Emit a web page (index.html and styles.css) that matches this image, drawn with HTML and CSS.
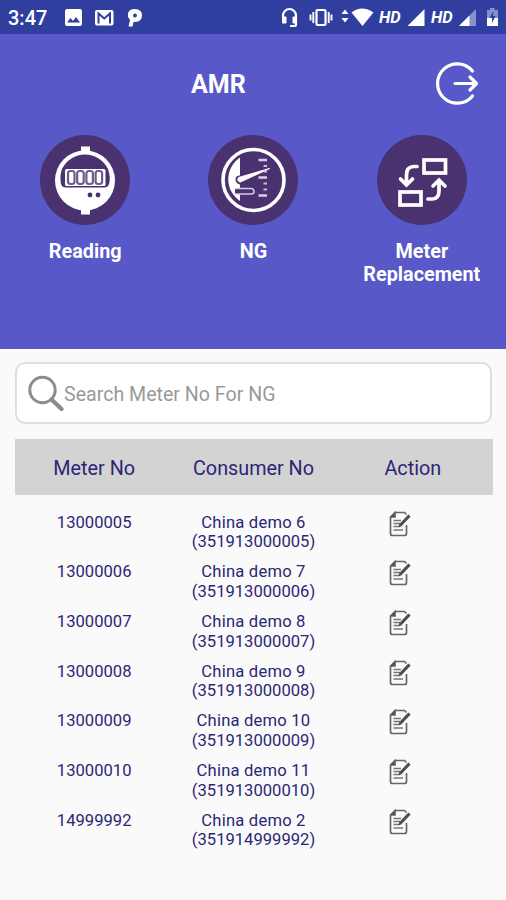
FILE: index.html
```html
<!DOCTYPE html>
<html lang="en">
<head>
  <meta charset="UTF-8">
  <meta name="viewport" content="width=device-width, initial-scale=1.0">
  <title>AMR</title>
  <link rel="stylesheet" href="styles.css">
</head>
<body>
  <svg class="sprite" aria-hidden="true">
    <symbol id="edit" viewBox="0 0 22 26">
      <path d="M6 1.5H15.5L17.5 3.5M17.500 14V22.500Q17.500 24.500 15.500 24.500H3.500Q1.500 24.500 1.500 22.500V6L6 1.500V6H1.500" fill="none" stroke="#666" stroke-width="1.700"/>
      <path d="M1.500 6L6 1.500V6Z" fill="#555"/>
      <path d="M4.500 9.500H12M4.500 12.500H11M4.500 15.500H10M4.500 19H14" stroke="#777" stroke-width="1.400"/>
      <path d="M11.500 14L20.500 4.500" stroke="#4d4d4d" stroke-width="3.200"/>
      <path d="M9.500 16.500L10.500 12.500L13.200 14.900Z" fill="#4d4d4d"/>
    </symbol>
  </svg>

  <div class="status-bar">
    <span class="time">3:47</span>
    <svg class="status-icons" width="78" height="34" viewBox="64 0 78 34">
      <rect x="65" y="9" width="17" height="17" rx="2" fill="#fff"/>
      <path d="M67 22.500L70.500 18L73 21L76 17L80 22.500Z" fill="#303f9f"/>
      <rect x="95" y="10" width="18.500" height="15.500" rx="2" fill="#fff"/>
      <path d="M98.500 23.500V13.500L104.200 18.500L110 13.500V23.500" fill="none" stroke="#303f9f" stroke-width="2"/>
      <path d="M128 17V13.500Q129 9 134.500 9Q142 9 142 15.500Q142 22 135 22H133.500L132.500 26.500H128.500L130 20Z" fill="#fff"/>
      <circle cx="135" cy="15.500" r="1.900" fill="#303f9f"/>
    </svg>
    <svg class="status-icons right" width="96" height="34" viewBox="280 0 96 34">
      <path d="M283 17V15.500A6.500 6.500 0 0 1 296 15.500V24.500Q296 26 294 26H290" fill="none" stroke="#fff" stroke-width="2.200"/>
      <rect x="282" y="16.500" width="4.500" height="7" rx="1" fill="#fff"/>
      <rect x="292.500" y="16.500" width="4.500" height="7" rx="1" fill="#fff"/>
      <rect x="316.500" y="10" width="9" height="15" rx="1" fill="none" stroke="#fff" stroke-width="2.200"/>
      <path d="M313.300 12V23M310.500 14.500V20.500M328.700 12V23M331.500 14.500V20.500" stroke="#fff" stroke-width="1.900"/>
      <path d="M341.500 14L345 9.500L348.500 14ZM341.500 18L345 22.500L348.500 18Z" fill="#fff"/>
      <path d="M351.500 12.500Q362 4.500 373.500 12.500L362.500 26Z" fill="#fff"/>
    </svg>
    <span class="hd">HD</span>
    <svg class="status-icons" width="18" height="34" viewBox="407 0 18 34">
      <path d="M407.500 26L424.500 9V26Z" fill="#fff"/>
    </svg>
    <span class="hd second">HD</span>
    <svg class="status-icons" width="42" height="34" viewBox="458 0 42 34">
      <path d="M459 26L476 9V26Z" fill="#8690ca"/>
      <path d="M459 26L469.500 15.500V26Z" fill="#fff"/>
      <path d="M487 10H490V8H494.500V10H498V26H487Z" fill="#8690ca"/>
      <path d="M487 18H498V26H487Z" fill="#fff"/>
      <path d="M493.500 11L489.500 18H492V23L495.500 16H493Z" fill="#303f9f"/>
    </svg>
  </div>

  <header>
    <div class="title-row">
      <h1>AMR</h1>
      <svg class="logout" width="46" height="46" viewBox="434 60 46 46" fill="none" stroke="#fff" stroke-width="3.200" stroke-linecap="round" stroke-linejoin="round">
        <path d="M472.500 71A19.700 19.700 0 1 0 472.500 96"/>
        <path d="M455 83.500H476M470 77L476.500 83.500L470 90"/>
      </svg>
    </div>
    <nav>
      <a href="#reading">
        <svg width="90" height="90" viewBox="0 0 90 90">
          <circle cx="45" cy="45" r="45" fill="#49326f"/>
          <path d="M41 11.500H50V17H41ZM41 74H50V79.500H41Z" fill="#fff"/>
          <circle cx="45" cy="45.500" r="30" fill="#fff"/>
          <path d="M22 34A25.500 25.500 0 0 1 68 34Q71 43 69 49Q68 52.500 64 52.500H26Q22 52.500 21 49Q19.500 41 22 34Z" fill="#49326f"/>
          <rect x="25" y="34" width="40.500" height="17" rx="1.500" fill="#fff"/>
          <g fill="none" stroke="#6d5b8c" stroke-width="2.200">
            <rect x="28" y="36" width="6.500" height="13" rx="2.500"/>
            <rect x="37.200" y="36" width="6.500" height="13" rx="2.500"/>
            <rect x="46.400" y="36" width="6.500" height="13" rx="2.500"/>
            <rect x="55.600" y="36" width="6.500" height="13" rx="2.500"/>
          </g>
          <circle cx="50" cy="60" r="2.400" fill="#49326f"/>
          <circle cx="58" cy="60" r="2.400" fill="#49326f"/>
        </svg>
        <span>Reading</span>
      </a>
      <a href="#ng">
        <svg width="90" height="90" viewBox="0 0 90 90">
          <circle cx="45" cy="45" r="45" fill="#49326f"/>
          <circle cx="45.500" cy="45" r="30.500" fill="none" stroke="#fff" stroke-width="3.600"/>
          <path d="M32 22.500A26 26 0 0 0 32 66Z" fill="#fff"/>
          <path d="M30 43L50 37.500L32 47.500Q28.500 46 30 43Z" fill="#49326f" stroke="#49326f" stroke-width="4" stroke-linejoin="round"/>
          <path d="M30.500 42.500L61.500 33.500L32.500 47Q28.500 46.500 30.500 42.500Z" fill="#fff" stroke="#fff"/>
          <path d="M27 53.500H43.500Q46 54 46 56.500Q46 59 43.500 59H27" fill="#49326f" stroke="#d6cce2" stroke-width="1.500"/>
          <path d="M50.500 25H59M50.500 42.500H59M50.500 60.500H59" stroke="#d9d0e4" stroke-width="2.500"/>
          <path d="M55.500 31H59M55.500 36.500H59M55.500 48.500H59M55.500 54.500H59" stroke="#c8bcd6" stroke-width="2.200"/>
        </svg>
        <span>NG</span>
      </a>
      <a href="#replacement">
        <svg width="90" height="90" viewBox="0 0 90 90" fill="none" stroke="#fff" stroke-width="3.700" stroke-linecap="round" stroke-linejoin="miter">
          <circle cx="45" cy="45" r="45" fill="#49326f" stroke="none"/>
          <rect x="47" y="25" width="21.500" height="13"/>
          <rect x="23" y="57" width="21" height="13"/>
          <path d="M40 31.500H36.500Q29.500 32 29.500 40V49M23.500 44L29.500 50L35.500 44"/>
          <path d="M51 64H55.500Q62 63.500 62 56V46M56 51L62 45L68 51"/>
        </svg>
        <span>Meter<br>Replacement</span>
      </a>
    </nav>
  </header>

  <main>
    <form class="search">
      <svg width="36" height="37" viewBox="0 0 36 37" fill="none" stroke="#8c8c8c">
        <circle cx="14.500" cy="15" r="12.700" stroke-width="3"/>
        <path d="M23.500 24.500L33.500 34" stroke-width="4.200" stroke-linecap="round"/>
      </svg>
      <input type="text" placeholder="Search Meter No For NG">
    </form>

    <table>
      <thead>
        <tr><th>Meter No</th><th>Consumer No</th><th>Action</th></tr>
      </thead>
      <tbody>
        <tr>
          <td>13000005</td>
          <td><span class="name">China demo 6</span><br>(351913000005)</td>
          <td class="action"><svg><use href="#edit"/></svg></td>
        </tr>
        <tr>
          <td>13000006</td>
          <td><span class="name">China demo 7</span><br>(351913000006)</td>
          <td class="action"><svg><use href="#edit"/></svg></td>
        </tr>
        <tr>
          <td>13000007</td>
          <td><span class="name">China demo 8</span><br>(351913000007)</td>
          <td class="action"><svg><use href="#edit"/></svg></td>
        </tr>
        <tr>
          <td>13000008</td>
          <td><span class="name">China demo 9</span><br>(351913000008)</td>
          <td class="action"><svg><use href="#edit"/></svg></td>
        </tr>
        <tr>
          <td>13000009</td>
          <td><span class="name">China demo 10</span><br>(351913000009)</td>
          <td class="action"><svg><use href="#edit"/></svg></td>
        </tr>
        <tr>
          <td>13000010</td>
          <td><span class="name">China demo 11</span><br>(351913000010)</td>
          <td class="action"><svg><use href="#edit"/></svg></td>
        </tr>
        <tr>
          <td>14999992</td>
          <td><span class="name">China demo 2</span><br>(351914999992)</td>
          <td class="action"><svg><use href="#edit"/></svg></td>
        </tr>
      </tbody>
    </table>
  </main>
</body>
</html>
```
FILE: styles.css
```css
* {
  box-sizing: border-box;
}
body {
  font-family: Roboto, sans-serif;
  margin: 0;
  height: 900px;
  overflow: hidden;
  background-color: #fafafa;
}
svg {
  display: block;
  flex-shrink: 0;
}
.sprite {
  display: none;
}
.status-bar {
  display: flex;
  align-items: center;
  height: 34px;
  padding-left: 8px;
  background: #303f9f;
  color: white;
}
.time {
  width: 56px;
  font-size: 20px;
  font-weight: 500;
  padding-top: 2px;
}
.status-icons.right {
  margin-left: 138px;
}
.hd {
  width: 31px;
  padding-left: 3px;
  font-size: 16.5px;
  font-weight: 700;
  font-style: italic;
}
.hd.second {
  width: 33px;
  padding-left: 6px;
}
header {
  height: 315px;
  background: #5858c8;
  color: white;
}
.title-row {
  display: flex;
  justify-content: space-between;
  align-items: center;
  height: 101px;
  padding: 0 26px 0 191px;
}
.logout {
  margin-bottom: 3px;
}
h1 {
  margin: 0;
  font-size: 25px;
  font-weight: 700;
}
nav {
  display: grid;
  grid-template-columns: repeat(3, 1fr);
  padding-left: 1px;
}
nav a {
  display: flex;
  flex-direction: column;
  align-items: center;
  gap: 15px;
  color: white;
  font-size: 19.8px;
  line-height: 23px;
  font-weight: 700;
  text-align: center;
  text-decoration: none;
}
main {
  padding: 13px 14px 0 15px;
}
.search {
  display: flex;
  align-items: center;
  height: 62px;
  padding-left: 11px;
  background: white;
  border: 2px solid #dedede;
  border-radius: 10px;
}
.search input {
  flex: 1;
  padding: 2px 0 0;
  border: none;
  outline: none;
  background: none;
  font-family: inherit;
  font-size: 19.6px;
}
.search input::placeholder {
  color: #999;
}
table {
  width: 478px;
  margin: 15px 0 0 -0.5px;
  border-collapse: collapse;
  table-layout: fixed;
  color: #2b2675;
  text-align: center;
}
th {
  height: 56px;
  padding: 2px 0 0;
  background: #d3d3d3;
  font-size: 19.8px;
  font-weight: 400;
}
td {
  height: 49.7px;
  padding: 0;
  vertical-align: top;
  font-size: 16.6px;
  line-height: 19.7px;
}
tbody::before {
  content: "";
  display: table-row;
  height: 17.6px;
}
.name {
  letter-spacing: 0.2px;
}
.action svg {
  width: 22px;
  height: 26px;
  margin: -2px 0 0 56px;
}
```
